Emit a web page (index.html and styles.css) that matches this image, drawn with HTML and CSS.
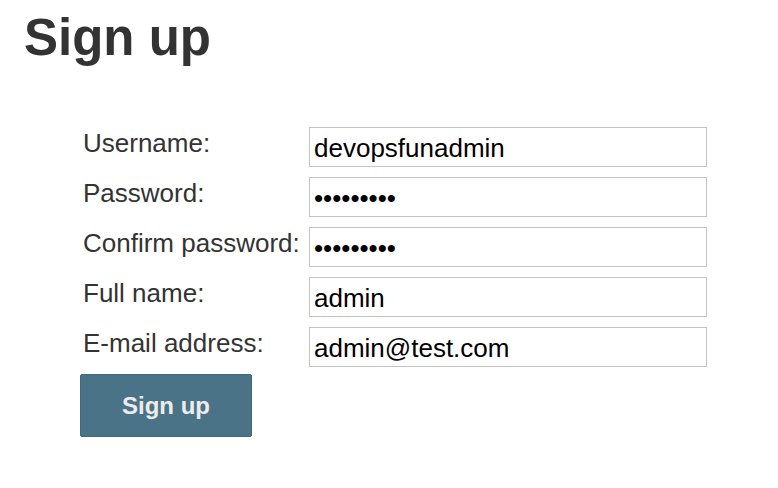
FILE: index.html
```html
<!DOCTYPE html>
<html>
<head>
<meta charset="utf-8">
<link rel="stylesheet" href="styles.css">
</head>
<body>
<h1 class="title">Sign up</h1>
<form class="signup">
  <div class="fields">
    <label class="lbl" for="u">Username:</label>
    <input class="inp" id="u" type="text" value="devopsfunadmin">
    <label class="lbl" for="p1">Password:</label>
    <input class="inp" id="p1" type="password" value="123456789">
    <label class="lbl" for="p2">Confirm password:</label>
    <input class="inp" id="p2" type="password" value="123456789">
    <label class="lbl" for="fn">Full name:</label>
    <input class="inp" id="fn" type="text" value="admin">
    <label class="lbl" for="em">E-mail address:</label>
    <input class="inp" id="em" type="text" value="admin@test.com">
  </div>
  <button class="btn" type="button">Sign up</button>
</form>
</body>
</html>
```
FILE: styles.css
```css
html, body {
  margin: 0;
  padding: 0;
  background: #fff;
}
body {
  font-family: "Liberation Sans", Arial, Helvetica, sans-serif;
  color: #333;
}
.title {
  margin: 12px 0 0 24px;
  font-size: 51px;
  line-height: 51px;
  font-weight: bold;
  color: #333;
}
.signup {
  margin: 64px 0 0 83px;
}
.fields {
  display: grid;
  grid-template-columns: 216px 398px;
  grid-auto-rows: 40px;
  column-gap: 10px;
  row-gap: 10px;
  justify-content: start;
}
.lbl {
  font-size: 26px;
  line-height: 28px;
  padding-top: 2px;
  color: #333;
  white-space: nowrap;
}
.inp {
  box-sizing: border-box;
  width: 398px;
  height: 40px;
  margin: 0;
  padding: 3px 4px 0 4px;
  border: 1px solid #c4c4c4;
  border-radius: 0;
  font-family: "Liberation Sans", Arial, sans-serif;
  font-size: 26px;
  color: #000;
  background: #fff;
  outline: none;
}
.btn {
  display: block;
  margin: 7px 0 0 -3px;
  width: 172px;
  height: 63px;
  background: #4b7387;
  border: 1px solid #426a7d;
  border-radius: 2px;
  color: #ececec;
  font-family: "Liberation Sans", Arial, sans-serif;
  font-size: 24px;
  font-weight: bold;
  padding: 0;
  padding-top: 1px;
}
```
